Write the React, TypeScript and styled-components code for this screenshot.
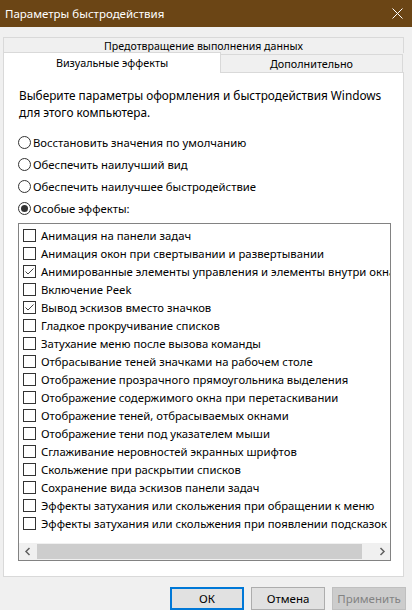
import React from 'react'
import styled, { createGlobalStyle } from 'styled-components'

const GlobalStyle = createGlobalStyle`
  html, body {
    margin: 0;
    padding: 0;
    background: #f0f0f0;
  }
  body {
    font-family: 'Noto Sans', 'Liberation Sans', sans-serif;
    font-size: 11.3px;
    color: #000;
  }
`

const Window = styled.div`
  width: 412px;
  height: 610px;
  display: flex;
  flex-direction: column;
  background: #f0f0f0;
  overflow: hidden;
`

const TitleBar = styled.div`
  height: 27px;
  flex: none;
  background: #6b4515;
  color: #fff;
  display: flex;
  align-items: center;
  justify-content: space-between;
  padding: 0 9px 0 5px;
  font-size: 11.5px;
`

const Body = styled.div`
  display: flex;
  flex-direction: column;
  padding: 10px 8px 0 3px;
`

const BackTab = styled.div`
  height: 15px;
  border: 1px solid #d9d9d9;
  border-bottom: none;
  display: flex;
  align-items: center;
  justify-content: center;
  font-size: 10.6px;
`

const FrontRow = styled.div`
  display: flex;
  align-items: flex-end;
  height: 20px;
  margin-top: -1px;
  font-size: 10.8px;
`

const Tab = styled.div<{ $active?: boolean }>`
  display: flex;
  align-items: center;
  justify-content: center;
  border: 1px solid #d9d9d9;
  border-bottom: none;
  box-sizing: border-box;
  position: relative;
  z-index: ${p => (p.$active ? 1 : 0)};
  background: ${p => (p.$active ? '#fff' : '#f0f0f0')};
  height: ${p => (p.$active ? '21px' : '18px')};
  margin-bottom: ${p => (p.$active ? '-1px' : '0')};
  width: ${p => (p.$active ? '218px' : '182px')};
  ${p => (p.$active ? '' : 'border-left: none;')}
  padding-bottom: ${p => (p.$active ? '2px' : '0')};
`

const Panel = styled.div`
  height: 505px;
  box-sizing: border-box;
  border: 1px solid #d9d9d9;
  background: #fff;
  padding: 14px 12px 0 15px;
  display: flex;
  flex-direction: column;
`

const Description = styled.div`
  line-height: 17px;
  font-size: 11.8px;
`

const RadioGroup = styled.div`
  margin-top: 10px;
  display: flex;
  flex-direction: column;
`

const RadioRow = styled.div`
  height: 22px;
  display: flex;
  align-items: center;
  margin-left: -1px;
`

const RadioCircle = styled.span<{ $checked?: boolean }>`
  width: 13px;
  height: 13px;
  box-sizing: border-box;
  border-radius: 50%;
  border: 1px solid #333;
  margin-right: 2px;
  display: flex;
  align-items: center;
  justify-content: center;
  &::after {
    content: '';
    width: 7px;
    height: 7px;
    border-radius: 50%;
    background: ${p => (p.$checked ? '#333' : 'transparent')};
  }
`

const ListBox = styled.div`
  margin: 4px 0 0 -1px;
  width: 373px;
  height: 338px;
  box-sizing: border-box;
  border: 1px solid #828282;
  display: flex;
  flex-direction: column;
`

const ListItems = styled.div`
  flex: 1;
  overflow: hidden;
  padding-top: 2px;
`

const Item = styled.div`
  height: 18px;
  display: flex;
  align-items: center;
  padding-left: 4px;
  white-space: nowrap;
`

const CheckBox = styled.span`
  flex: none;
  width: 13px;
  height: 13px;
  box-sizing: border-box;
  border: 1px solid #333;
  margin-right: 5px;
  display: flex;
  align-items: center;
  justify-content: center;
`

const HScroll = styled.div`
  height: 17px;
  flex: none;
  background: #f0f0f0;
  display: flex;
  align-items: center;
`

const ScrollArrow = styled.div`
  width: 17px;
  height: 17px;
  flex: none;
  display: flex;
  align-items: center;
  justify-content: center;
`

const ScrollTrack = styled.div`
  flex: 1;
  height: 15px;
  display: flex;
`

const ScrollThumb = styled.div`
  width: 325px;
  height: 15px;
  background: #cdcdcd;
  margin-left: 1px;
`

const ButtonRow = styled.div`
  display: flex;
  justify-content: flex-end;
  gap: 7px;
  margin: 10px -2px 0 0;
`

const Button = styled.button<{ $primary?: boolean; $disabled?: boolean }>`
  width: 74px;
  height: 23px;
  box-sizing: border-box;
  font-family: inherit;
  font-size: 11.5px;
  padding: 0;
  background: ${p => (p.$disabled ? '#cccccc' : '#e1e1e1')};
  color: ${p => (p.$disabled ? '#838383' : '#000')};
  border: 1px solid ${p => (p.$primary ? '#0078d7' : p.$disabled ? '#bfbfbf' : '#adadad')};
  box-shadow: ${p => (p.$primary ? 'inset 0 0 0 1px #0078d7' : 'none')};
`

const radios = [
  { label: 'Восстановить значения по умолчанию', checked: false },
  { label: 'Обеспечить наилучший вид', checked: false },
  { label: 'Обеспечить наилучшее быстродействие', checked: false },
  { label: 'Особые эффекты:', checked: true },
]

const effects = [
  { label: 'Анимация на панели задач', checked: false },
  { label: 'Анимация окон при свертывании и развертывании', checked: false },
  { label: 'Анимированные элементы управления и элементы внутри окна', checked: true },
  { label: 'Включение Peek', checked: false },
  { label: 'Вывод эскизов вместо значков', checked: true },
  { label: 'Гладкое прокручивание списков', checked: false },
  { label: 'Затухание меню после вызова команды', checked: false },
  { label: 'Отбрасывание теней значками на рабочем столе', checked: false },
  { label: 'Отображение прозрачного прямоугольника выделения', checked: false },
  { label: 'Отображение содержимого окна при перетаскивании', checked: false },
  { label: 'Отображение теней, отбрасываемых окнами', checked: false },
  { label: 'Отображение тени под указателем мыши', checked: false },
  { label: 'Сглаживание неровностей экранных шрифтов', checked: false },
  { label: 'Скольжение при раскрытии списков', checked: false },
  { label: 'Сохранение вида эскизов панели задач', checked: false },
  { label: 'Эффекты затухания или скольжения при обращении к меню', checked: false },
  { label: 'Эффекты затухания или скольжения при появлении подсказок', checked: false },
]

function CloseIcon() {
  return (
    <svg width="11" height="11" viewBox="0 0 11 11">
      <path d="M0.5 0.5 L10.5 10.5 M10.5 0.5 L0.5 10.5" stroke="#fff" strokeWidth="1" />
    </svg>
  )
}

function CheckMark() {
  return (
    <svg width="11" height="11" viewBox="0 0 11 11">
      <polyline points="1.5,5.5 4,8 9.5,2.5" fill="none" stroke="#444" strokeWidth="1" />
    </svg>
  )
}

function Chevron({ dir }: { dir: 'left' | 'right' }) {
  const d = dir === 'left' ? 'M5.5 1 L2 4.5 L5.5 8' : 'M2.5 1 L6 4.5 L2.5 8'
  return (
    <svg width="8" height="9" viewBox="0 0 8 9">
      <path d={d} fill="none" stroke="#606060" strokeWidth="1.5" />
    </svg>
  )
}

export default function App() {
  return (
    <Window>
      <GlobalStyle />
      <TitleBar>
        <span>Параметры быстродействия</span>
        <CloseIcon />
      </TitleBar>
      <Body>
        <BackTab>Предотвращение выполнения данных</BackTab>
        <FrontRow>
          <Tab $active>Визуальные эффекты</Tab>
          <Tab>Дополнительно</Tab>
        </FrontRow>
        <Panel>
          <Description>
            Выберите параметры оформления и быстродействия Windows
            <br />
            для этого компьютера.
          </Description>
          <RadioGroup>
            {radios.map(r => (
              <RadioRow key={r.label}>
                <RadioCircle $checked={r.checked} />
                {r.label}
              </RadioRow>
            ))}
          </RadioGroup>
          <ListBox>
            <ListItems>
              {effects.map(e => (
                <Item key={e.label}>
                  <CheckBox>{e.checked && <CheckMark />}</CheckBox>
                  {e.label}
                </Item>
              ))}
            </ListItems>
            <HScroll>
              <ScrollArrow>
                <Chevron dir="left" />
              </ScrollArrow>
              <ScrollTrack>
                <ScrollThumb />
              </ScrollTrack>
              <ScrollArrow>
                <Chevron dir="right" />
              </ScrollArrow>
            </HScroll>
          </ListBox>
        </Panel>
        <ButtonRow>
          <Button $primary>ОК</Button>
          <Button>Отмена</Button>
          <Button $disabled>Применить</Button>
        </ButtonRow>
      </Body>
    </Window>
  )
}
